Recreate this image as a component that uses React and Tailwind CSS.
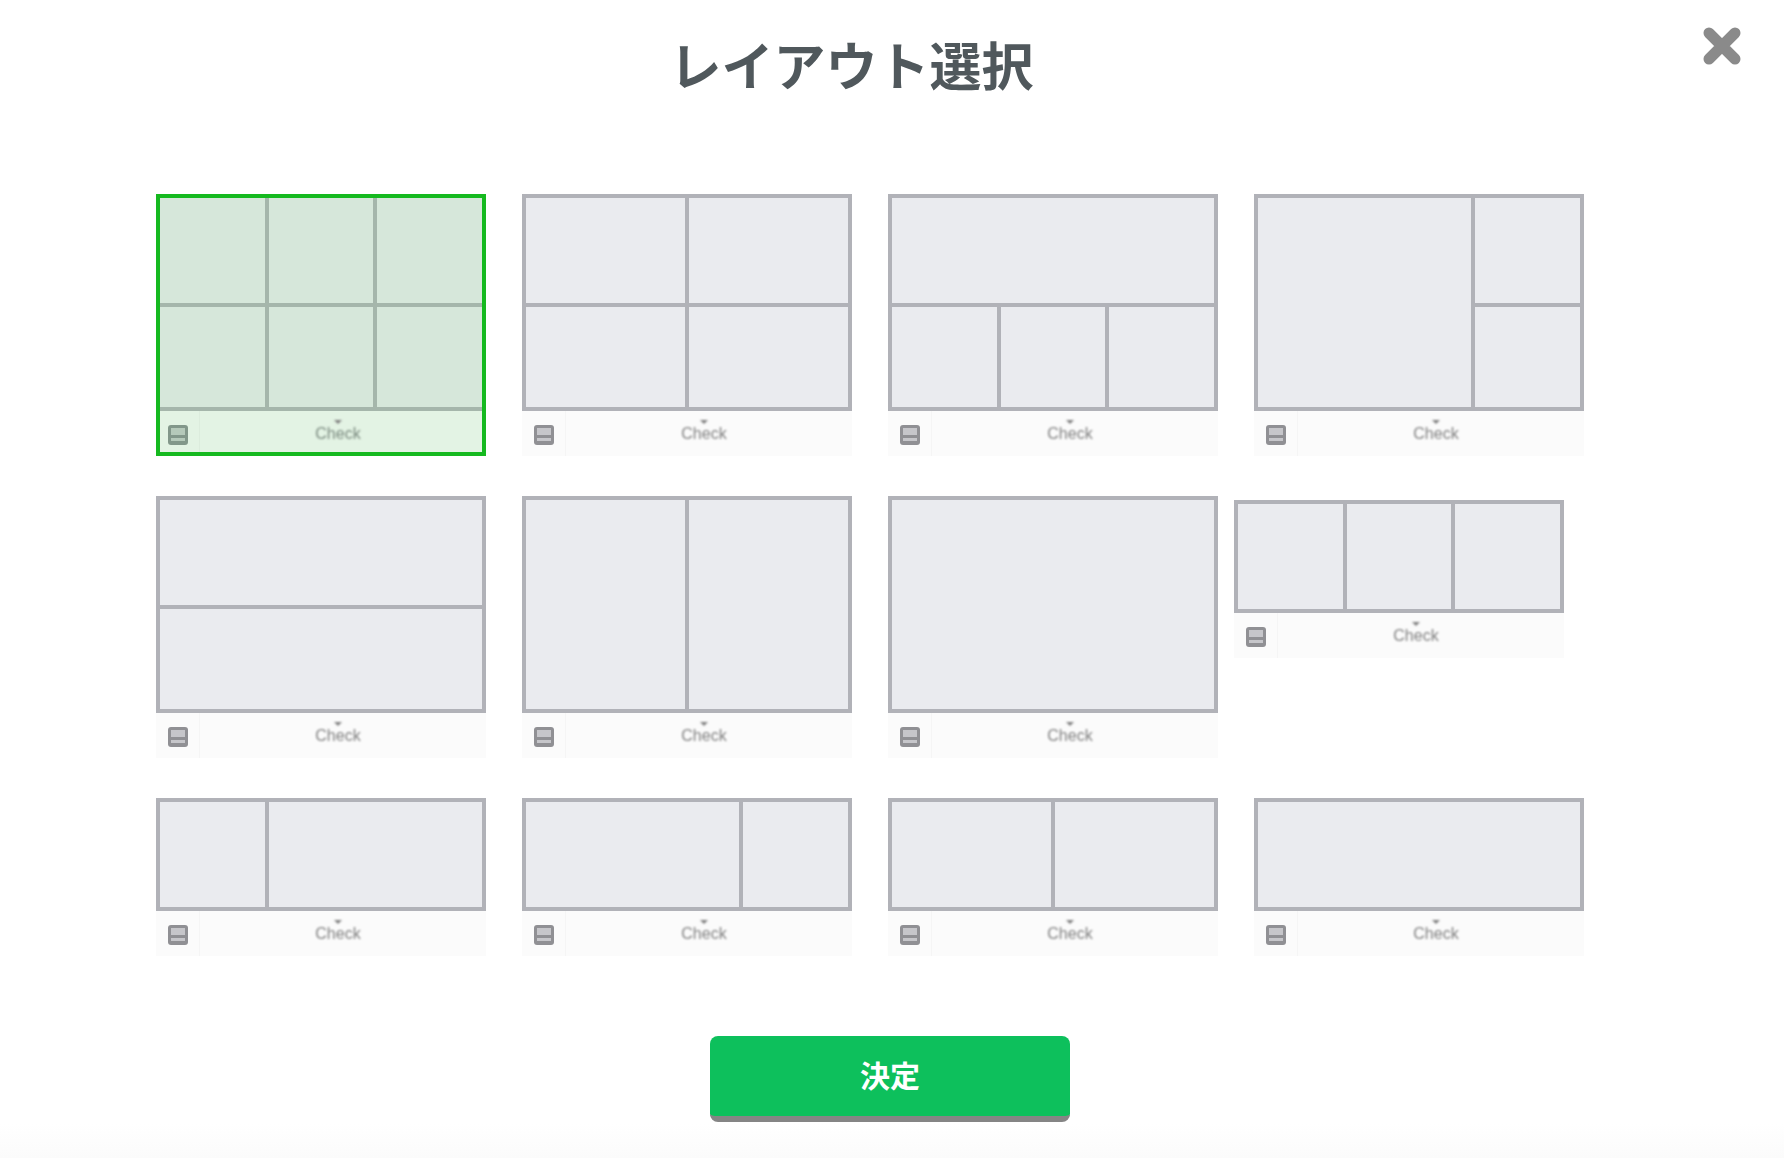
import React from 'react';

const font = { fontFamily: '"Liberation Sans", "Noto Sans CJK JP", sans-serif' };

const layouts = [
  { rows: 2, cells: ['col-span-2', 'col-span-2', 'col-span-2', 'col-span-2', 'col-span-2', 'col-span-2'], selected: true },
  { rows: 2, cells: ['col-span-3', 'col-span-3', 'col-span-3', 'col-span-3'] },
  { rows: 2, cells: ['col-span-6', 'col-span-2', 'col-span-2', 'col-span-2'] },
  { rows: 2, cells: ['col-span-4 row-span-2', 'col-span-2', 'col-span-2'] },
  { rows: 2, cells: ['col-span-6', 'col-span-6'] },
  { rows: 1, cells: ['col-span-3', 'col-span-3'] },
  { rows: 1, cells: ['col-span-6'] },
  { rows: 1, short: true, shifted: true, cells: ['col-span-2', 'col-span-2', 'col-span-2'] },
  { rows: 1, short: true, cells: ['col-span-2', 'col-span-4'] },
  { rows: 1, short: true, cells: ['col-span-4', 'col-span-2'] },
  { rows: 1, short: true, cells: ['col-span-3', 'col-span-3'] },
  { rows: 1, short: true, cells: ['col-span-6'] },
];

const BarIcon = ({ selected }) => (
  <svg width="20" height="20" viewBox="0 0 20 20" className="blur-[0.6px]">
    <rect width="20" height="20" rx="3" fill={selected ? '#82978a' : '#909094'} />
    <rect x="3" y="3" width="14" height="7" fill={selected ? '#b5c9ba' : '#c6c6ca'} />
    <rect x="3" y="13" width="14" height="3" fill={selected ? '#b5c9ba' : '#c6c6ca'} />
  </svg>
);

const LayoutCard = ({ layout }) => {
  const { rows, cells, selected, short, shifted } = layout;
  return (
    <div className={`relative w-[330px] shrink-0 ${shifted ? '-ml-5 mt-1' : ''}`}>
      <div
        className={`grid grid-cols-6 gap-1 p-1 blur-[0.5px] ${short ? 'h-[113px]' : 'h-[217px]'} ${
          rows === 2 ? 'grid-rows-[105px_1fr]' : 'grid-rows-1'
        } ${selected ? 'bg-[#a5b6ab]' : 'bg-[#b1b2b8]'}`}
      >
        {cells.map((c, i) => (
          <div key={i} className={`${c} ${selected ? 'bg-[#d6e7da]' : 'bg-[#eaebef]'}`} />
        ))}
      </div>
      <div className={`flex h-[45px] ${selected ? 'bg-[#e3f3e4]' : 'bg-[#fbfbfb]'}`}>
        <div
          className={`flex w-[44px] items-start justify-center border-r pt-[14px] ${
            selected ? 'border-[#dcecdd]' : 'border-[#f5f5f5]'
          }`}
        >
          <BarIcon selected={selected} />
        </div>
        <div className="flex flex-1 flex-col items-center pt-[9px] pr-[10px] blur-[0.8px]">
          <svg width="8" height="4" viewBox="0 0 8 4">
            <path d="M0 0h8L4 4z" fill="#808080" />
          </svg>
          <span className={`mt-[2px] text-base leading-4 ${selected ? 'text-[#7a8a7f]' : 'text-[#808080]'}`}>Check</span>
        </div>
      </div>
      {selected && <div className="absolute inset-0 border-4 border-[#15b91f]" />}
    </div>
  );
};

export default function App() {
  return (
    <div className="relative flex h-[1158px] flex-col bg-gradient-to-b from-white from-[97%] to-[#fbfbfb]" style={font}>
      {/* Header */}
      <div className="flex justify-center pt-[36px] pr-[81px]">
        <h1 className="text-[52px] leading-[64px] font-bold text-[#50585c]">レイアウト選択</h1>
      </div>
      <button className="absolute top-[27px] right-[43px]" aria-label="close">
        <svg width="38" height="38" viewBox="0 0 38 38" className="block">
          <path d="M6 6L32 32M32 6L6 32" stroke="#8a8a8a" strokeWidth="11" strokeLinecap="round" />
        </svg>
      </button>

      {/* Layout choices */}
      <div className="mt-[94px] flex flex-col gap-10 pl-[156px]">
        <div className="flex gap-9">
          {layouts.slice(0, 4).map((l, i) => <LayoutCard key={i} layout={l} />)}
        </div>
        <div className="flex h-[262px] items-start gap-9">
          {layouts.slice(4, 8).map((l, i) => <LayoutCard key={i} layout={l} />)}
        </div>
        <div className="flex gap-9">
          {layouts.slice(8).map((l, i) => <LayoutCard key={i} layout={l} />)}
        </div>
      </div>

      {/* Submit */}
      <div className="mt-[80px] flex justify-center pr-[4px]">
        <button className="h-[86px] w-[360px] rounded-lg border-b-[6px] border-[#858585] bg-[#0dc05c] text-[30px] font-bold text-white">
          決定
        </button>
      </div>
    </div>
  );
}
